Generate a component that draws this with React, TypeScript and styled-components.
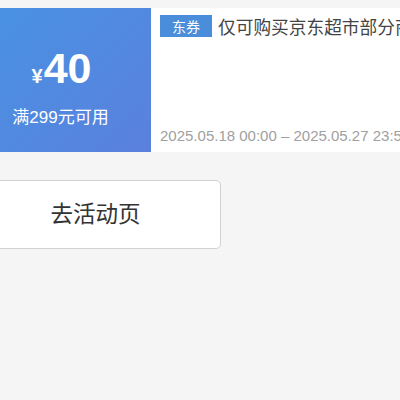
import React from "react";
import styled, { createGlobalStyle } from "styled-components";

const GlobalStyle = createGlobalStyle`
  html, body {
    margin: 0;
    padding: 0;
    background: #f5f5f5;
    overflow: hidden;
    font-family: "Liberation Sans", "Noto Sans CJK SC", sans-serif;
  }
  #root { width: 400px; height: 400px; overflow: hidden; }
`;

const Page = styled.div`
  margin-left: -30px;
  padding-top: 8px;
  display: flex;
  flex-direction: column;
  gap: 28px;
`;

const Card = styled.div`
  display: flex;
  width: 470px;
  height: 144px;
  background: #fff;
`;

const Amount = styled.div`
  width: 181px;
  flex: none;
  background: linear-gradient(135deg, #4894e3 0%, #5a80dd 100%);
  color: #fff;
  display: flex;
  flex-direction: column;
  align-items: center;
  padding-top: 39px;
  box-sizing: border-box;
`;

const Price = styled.div`
  display: flex;
  align-items: baseline;
  font-family: "Liberation Sans", sans-serif;
  font-weight: 700;
  line-height: 1;
  margin-left: 2px;
`;

const Yen = styled.span`
  font-size: 20px;
  font-weight: 700;
  margin-right: 1px;
`;

const Value = styled.span`
  font-size: 43px;
`;

const Condition = styled.div`
  margin-top: 18px;
  font-size: 17px;
  line-height: 20px;
  font-family: "Liberation Sans", "Noto Sans CJK SC", sans-serif;
  white-space: nowrap;
`;

const Info = styled.div`
  flex: 1;
  display: flex;
  flex-direction: column;
  justify-content: space-between;
  padding: 7px 0 6px 9px;
  overflow: hidden;
`;

const TitleRow = styled.div`
  display: flex;
  align-items: center;
  gap: 6px;
  white-space: nowrap;
`;

const Tag = styled.span`
  flex: none;
  height: 22px;
  padding: 0 12px;
  background: #4a8edb;
  color: #fff;
  font-size: 14px;
  line-height: 22px;
  font-family: "Noto Sans CJK SC", sans-serif;
`;

const Title = styled.span`
  font-size: 17.7px;
  color: #444;
  font-family: "Noto Sans CJK SC", sans-serif;
  line-height: 22px;
`;

const Period = styled.div`
  font-size: 15px;
  color: #a0a0a0;
  white-space: nowrap;
  line-height: 20px;
`;

const ActionButton = styled.button`
  width: 251px;
  height: 69px;
  background: #fff;
  border: 1px solid #d2d2d2;
  border-radius: 5px;
  font-size: 22.5px;
  color: #333;
  font-family: "Noto Sans CJK SC", sans-serif;
  padding: 0 0 6px 0;
  box-sizing: border-box;
`;

export default function App() {
  return (
    <>
      <GlobalStyle />
      <Page>
        <Card>
          <Amount>
            <Price>
              <Yen>¥</Yen>
              <Value>40</Value>
            </Price>
            <Condition>满299元可用</Condition>
          </Amount>
          <Info>
            <TitleRow>
              <Tag>东券</Tag>
              <Title>仅可购买京东超市部分商品</Title>
            </TitleRow>
            <Period>2025.05.18 00:00 – 2025.05.27 23:59</Period>
          </Info>
        </Card>
        <ActionButton>去活动页</ActionButton>
      </Page>
    </>
  );
}
